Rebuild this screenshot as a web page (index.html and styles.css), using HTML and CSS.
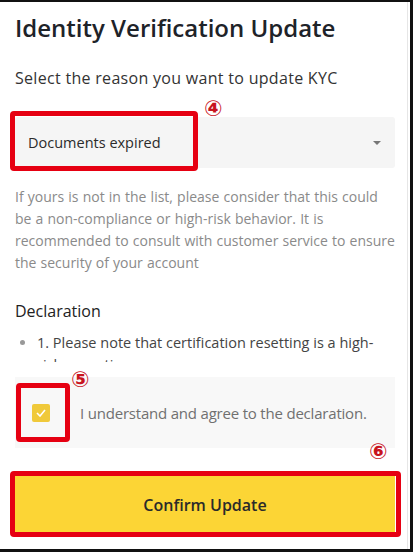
FILE: index.html
```html
<!DOCTYPE html>
<html lang="en">
<head>
    <meta charset="UTF-8">
    <meta name="viewport" content="width=device-width, initial-scale=1.0">
    <title>Identity Verification Update</title>
    <link rel="stylesheet" href="styles.css">
</head>
<body>
    <div class="frame">
        <div class="sheet">
            <h1 class="title">Identity Verification Update</h1>
            <p class="subtitle">Select the reason you want to update KYC</p>

            <div class="select">
                <span class="select-value">Documents expired</span>
                <span class="caret"></span>
                <div class="mark mark-select"></div>
                <span class="num num-4">④</span>
            </div>

            <p class="note">If yours is not in the list, please consider that this could be a non-compliance or high-risk behavior. It is recommended to consult with customer service to ensure the security of your account</p>

            <h2 class="section">Declaration</h2>
            <div class="terms">
                <ul>
                    <li>1. Please note that certification resetting is a high-risk operation</li>
                </ul>
            </div>

            <label class="agree">
                <span class="check">
                    <svg width="10" height="8" viewBox="0 0 10 8"><path d="M1 4l3 3 5-6" fill="none" stroke="#fff" stroke-width="1.6"/></svg>
                </span>
                <span class="agree-text">I understand and agree to the declaration.</span>
                <div class="mark mark-check"></div>
                <span class="num num-5">⑤</span>
                <span class="num num-6">⑥</span>
            </label>

            <div class="actions">
                <button class="confirm">Confirm Update</button>
                <div class="mark mark-button"></div>
            </div>
        </div>
    </div>
</body>
</html>
```
FILE: styles.css
```css
* {
    margin: 0;
    padding: 0;
    box-sizing: border-box;
}

body {
    background: #fff;
    font-family: 'Open Sans', 'Liberation Sans', sans-serif;
    color: #1e2329;
}

.frame {
    width: 413px;
    height: 552px;
    border-top: 2px solid #111;
    border-right: 3px solid #111;
    border-bottom: 3px solid #111;
    overflow: hidden;
}

.sheet {
    height: 100%;
    padding: 11px 12px 0 15px;
    border-right: 1px solid #e6e6e6;
    margin-right: 2px;
}

.title {
    font-size: 24px;
    font-weight: 600;
    line-height: 30px;
}

.subtitle {
    margin-top: 25px;
    font-size: 16px;
    line-height: 20px;
    letter-spacing: 0.3px;
    color: #333;
}

.select {
    position: relative;
    margin-top: 29px;
    height: 51px;
    background: #f5f5f5;
    border-radius: 3px;
    display: flex;
    align-items: center;
    justify-content: space-between;
    padding: 0 14px 0 13px;
}

.select-value {
    font-size: 14.5px;
    color: #2b2b2b;
}

.caret {
    width: 0;
    height: 0;
    border-left: 4px solid transparent;
    border-right: 4px solid transparent;
    border-top: 4px solid #777;
}

.note {
    margin-top: 18px;
    margin-right: -1px;
    font-size: 14px;
    line-height: 22px;
    word-spacing: 0.5px;
    color: #8a8a8a;
}

.section {
    margin-top: 26px;
    font-size: 16px;
    font-weight: 500;
    line-height: 22px;
    color: #222;
}

.terms {
    margin-top: 10px;
    height: 30px;
    overflow: hidden;
}

.terms ul {
    padding-left: 22px;
    font-size: 14.5px;
    line-height: 22px;
    color: #444;
}

.terms li::marker {
    color: #999;
}

.agree {
    position: relative;
    margin-top: 15px;
    height: 71px;
    background: #f8f8f8;
    display: flex;
    align-items: center;
    gap: 30px;
    padding-left: 17px;
}

.check {
    width: 18px;
    height: 18px;
    border-radius: 2px;
    background: #f0c93a;
    display: flex;
    align-items: center;
    justify-content: center;
}

.agree-text {
    font-size: 15px;
    letter-spacing: -0.2px;
    color: #707070;
}

.actions {
    position: relative;
    margin-top: 28px;
}

.confirm {
    width: 100%;
    height: 57px;
    border: none;
    background: #fcd535;
    font-family: inherit;
    font-size: 16px;
    font-weight: 600;
    color: #2a2a2a;
}

/* red annotation boxes */
.mark {
    position: absolute;
    border: 5px solid #e60012;
    border-radius: 4px;
    pointer-events: none;
}

.mark-select {
    left: -5px;
    top: -6px;
    width: 188px;
    height: 60px;
}

.mark-check {
    left: 1px;
    top: 6px;
    width: 54px;
    height: 59px;
}

.mark-button {
    left: -5px;
    top: -5px;
    right: -6px;
    bottom: -4px;
}

.num {
    position: absolute;
    font-family: 'DejaVu Sans', sans-serif;
    font-size: 22px;
    font-weight: bold;
    line-height: 1;
    color: #c8141e;
}

.num-4 {
    left: 189px;
    top: -19px;
}

.num-5 {
    left: 56px;
    top: -8px;
}

.num-6 {
    left: 354px;
    top: 64px;
}
```
